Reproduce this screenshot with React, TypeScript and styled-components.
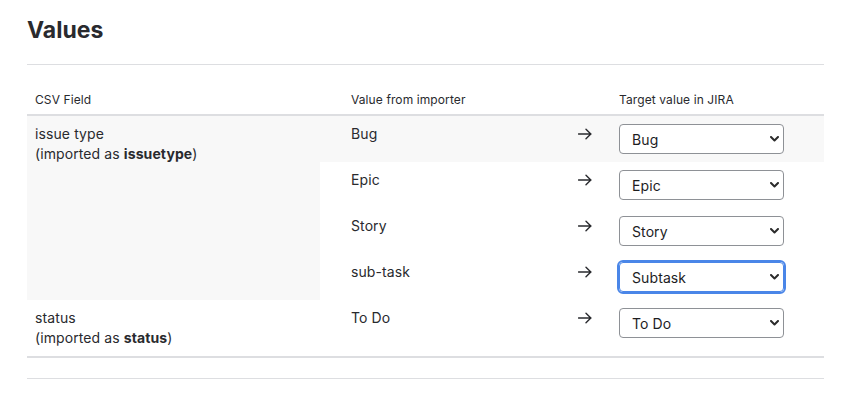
import React from "react";
import styled, { createGlobalStyle } from "styled-components";

const Global = createGlobalStyle`
  html, body { margin: 0; padding: 0; background: #ffffff; }
  body {
    font-family: Inter, "Noto Sans", "Liberation Sans", sans-serif;
    color: #292a2e;
    -webkit-font-smoothing: antialiased;
  }
`;

const Page = styled.div`
  padding: 16px 23px 0 27px;
`;

const Title = styled.h2`
  margin: 0;
  font-size: 23px;
  line-height: 28px;
  font-weight: 700;
  color: #292a2e;
`;

const Rule = styled.div<{ $top: number }>`
  height: 1px;
  background: #dddee1;
  margin-top: ${(p) => p.$top}px;
`;

const Table = styled.table`
  width: 100%;
  margin-top: 19px;
  border-collapse: collapse;
  table-layout: fixed;
  border-bottom: 2px solid #dddee1;
`;

const Th = styled.th<{ $pl?: number }>`
  text-align: left;
  font-weight: 400;
  font-size: 12px;
  line-height: 16px;
  padding: 8px 8px 6px ${(p) => p.$pl ?? 8}px;
  border-bottom: 2px solid #dddee1;
  color: #292a2e;
  letter-spacing: 0.1px;
`;

const Row = styled.tr<{ $shaded?: boolean }>`
  background: ${(p) => (p.$shaded ? "#f8f8f8" : "transparent")};
`;

const Td = styled.td<{ $pl?: number; $shaded?: boolean }>`
  vertical-align: top;
  font-size: 14px;
  line-height: 20px;
  letter-spacing: 0.1px;
  padding: 8px 8px 8px ${(p) => p.$pl ?? 8}px;
  background: ${(p) => (p.$shaded ? "#f8f8f8" : "transparent")};
`;

const ArrowCell = styled.td`
  vertical-align: top;
  padding: 12px 8px 8px 8px;
  line-height: 0;
`;

const SelectWrap = styled.div`
  position: relative;
  width: 165px;
  height: 30px;
`;

const Select = styled.select<{ $focused?: boolean }>`
  appearance: none;
  -webkit-appearance: none;
  box-sizing: border-box;
  width: 165px;
  height: 30px;
  margin: 0;
  padding: 0 24px 0 12px;
  font-family: Inter, "Noto Sans", "Liberation Sans", sans-serif;
  font-size: 14px;
  letter-spacing: 0.1px;
  color: #1d1d1f;
  background: #ffffff;
  border: 1px solid ${(p) => (p.$focused ? "#4a86e8" : "#8e9196")};
  border-radius: 4px;
  outline: ${(p) => (p.$focused ? "2px solid #4a86e8" : "none")};
  outline-offset: 0;
`;

const Chevron = styled.svg`
  position: absolute;
  right: 5px;
  top: 12px;
  pointer-events: none;
`;

const Bold = styled.b`
  font-weight: 700;
`;

type Field = {
  name: string;
  key: string;
  values: { from: string; to: string; options: string[]; focused?: boolean }[];
};

const issueOptions = ["Bug", "Epic", "Story", "Subtask", "Task"];
const statusOptions = ["To Do", "In Progress", "Done"];

const fields: Field[] = [
  {
    name: "issue type",
    key: "issuetype",
    values: [
      { from: "Bug", to: "Bug", options: issueOptions },
      { from: "Epic", to: "Epic", options: issueOptions },
      { from: "Story", to: "Story", options: issueOptions },
      { from: "sub-task", to: "Subtask", options: issueOptions, focused: true },
    ],
  },
  {
    name: "status",
    key: "status",
    values: [{ from: "To Do", to: "To Do", options: statusOptions }],
  },
];

const Arrow = () => (
  <svg width="14" height="12" viewBox="0 0 14 12" fill="none">
    <path d="M0.5 6H13M8 1.2L12.8 6L8 10.8" stroke="#292a2e" strokeWidth="1.4" strokeLinecap="round" strokeLinejoin="round" />
  </svg>
);

const ValueSelect = ({ value, options, focused }: { value: string; options: string[]; focused?: boolean }) => (
  <SelectWrap>
    <Select $focused={focused} defaultValue={value}>
      {options.map((o) => (
        <option key={o} value={o}>
          {o}
        </option>
      ))}
    </Select>
    <Chevron width="9" height="6" viewBox="0 0 9 6" fill="none">
      <path d="M1 1L4.5 4.5L8 1" stroke="#2b2b2b" strokeWidth="2" strokeLinecap="round" strokeLinejoin="round" />
    </Chevron>
  </SelectWrap>
);

export default function App() {
  return (
    <>
      <Global />
      <Page>
        <Title>Values</Title>
        <Rule $top={20} />
        <Table>
          <colgroup>
            <col style={{ width: 293 }} />
            <col style={{ width: 250 }} />
            <col style={{ width: 41 }} />
            <col />
          </colgroup>
          <thead>
            <tr>
              <Th>CSV Field</Th>
              <Th $pl={31}>Value from importer</Th>
              <Th />
              <Th>Target value in JIRA</Th>
            </tr>
          </thead>
          <tbody>
            {fields.map((f, fi) =>
              f.values.map((v, vi) => {
                const shaded = fi === 0 && vi === 0;
                return (
                  <Row key={f.key + v.from} $shaded={shaded}>
                    {vi === 0 && (
                      <Td rowSpan={f.values.length} $shaded={fi === 0}>
                        {f.name}
                        <br />
                        (imported as <Bold>{f.key}</Bold>)
                      </Td>
                    )}
                    <Td $pl={31}>{v.from}</Td>
                    <ArrowCell>
                      <Arrow />
                    </ArrowCell>
                    <Td>
                      <ValueSelect value={v.to} options={v.options} focused={v.focused} />
                    </Td>
                  </Row>
                );
              })
            )}
          </tbody>
        </Table>
        <Rule $top={20} />
      </Page>
    </>
  );
}
